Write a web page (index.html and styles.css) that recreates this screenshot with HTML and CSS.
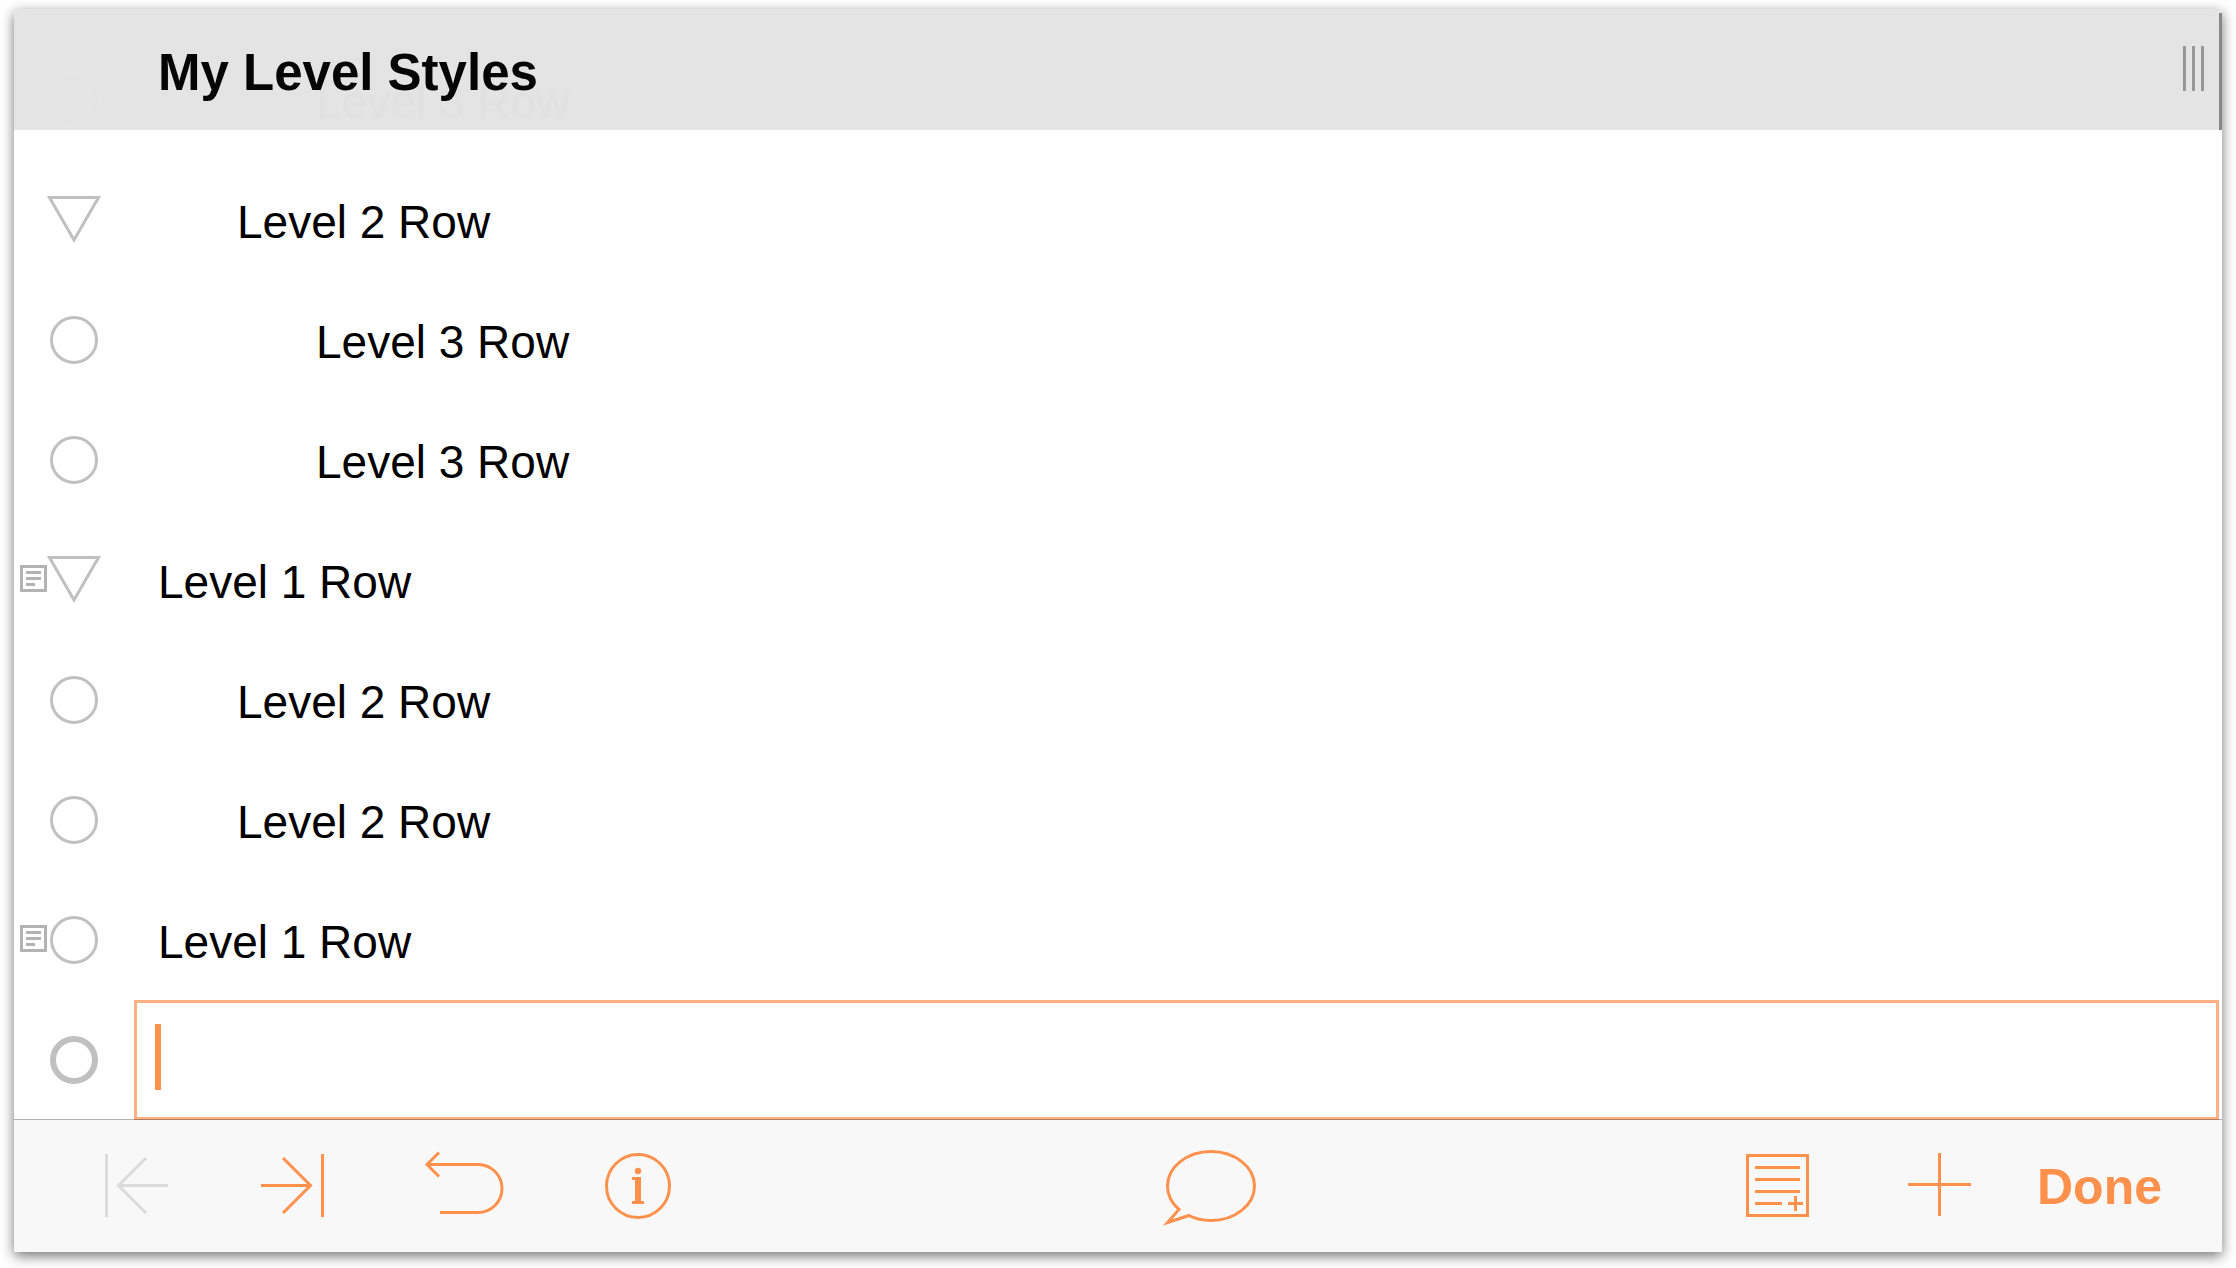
FILE: index.html
```html
<!DOCTYPE html>
<html lang="en">
<head>
<meta charset="UTF-8">
<meta name="viewport" content="width=device-width, initial-scale=1.0">
<title>My Level Styles</title>
<link rel="stylesheet" href="styles.css">
</head>
<body>
<svg class="defs" aria-hidden="true">
  <symbol id="icon-open" viewBox="0 0 54 48"><path d="M2.5 1.5h49L27 44z"/></symbol>
  <symbol id="icon-leaf" viewBox="0 0 54 48"><circle cx="27" cy="24" r="22.5"/></symbol>
  <symbol id="icon-note" viewBox="0 0 27 27"><path d="M1.5 1.5h24v24h-24zM6 7.5h15M6 13.5h15M6 19.5h9"/></symbol>
</svg>

<div class="window">
  <header>
    <div class="row under" aria-hidden="true">
      <div class="gutter"><span class="handle"><svg><use href="#icon-leaf"/></svg></span></div>
      <span class="text level-3">Level 3 Row</span>
    </div>
    <h1>My Level Styles</h1>
    <button class="grip" aria-label="Resize columns"><i></i><i></i><i></i></button>
    <div class="scroll-edge"></div>
  </header>

  <main class="outline">
    <div class="row">
      <div class="gutter"><button class="handle" aria-label="Collapse row"><svg><use href="#icon-open"/></svg></button></div>
      <span class="text level-2">Level 2 Row</span>
    </div>
    <div class="row">
      <div class="gutter"><button class="handle" aria-label="Select row"><svg><use href="#icon-leaf"/></svg></button></div>
      <span class="text level-3">Level 3 Row</span>
    </div>
    <div class="row">
      <div class="gutter"><button class="handle" aria-label="Select row"><svg><use href="#icon-leaf"/></svg></button></div>
      <span class="text level-3">Level 3 Row</span>
    </div>
    <div class="row">
      <div class="gutter">
        <button class="note" aria-label="Show note"><svg><use href="#icon-note"/></svg></button>
        <button class="handle" aria-label="Collapse row"><svg><use href="#icon-open"/></svg></button>
      </div>
      <span class="text">Level 1 Row</span>
    </div>
    <div class="row">
      <div class="gutter"><button class="handle" aria-label="Select row"><svg><use href="#icon-leaf"/></svg></button></div>
      <span class="text level-2">Level 2 Row</span>
    </div>
    <div class="row">
      <div class="gutter"><button class="handle" aria-label="Select row"><svg><use href="#icon-leaf"/></svg></button></div>
      <span class="text level-2">Level 2 Row</span>
    </div>
    <div class="row">
      <div class="gutter">
        <button class="note" aria-label="Show note"><svg><use href="#icon-note"/></svg></button>
        <button class="handle" aria-label="Select row"><svg><use href="#icon-leaf"/></svg></button>
      </div>
      <span class="text">Level 1 Row</span>
    </div>
    <div class="row">
      <div class="gutter"><button class="handle" aria-label="Select row"><svg viewBox="0 0 54 48"><circle class="thick" cx="27" cy="24" r="21"/></svg></button></div>
      <label class="editor">
        <span class="caret"></span>
        <input type="text" aria-label="Row text">
      </label>
    </div>
  </main>

  <footer class="toolbar">
    <div class="tools">
      <button aria-label="Outdent" disabled>
        <svg width="63" height="64" viewBox="0 0 63 64"><path d="M1.5 0v63M63 31.5H14M41 4L13.5 31.5 41 59"/></svg>
      </button>
      <button aria-label="Indent">
        <svg width="63" height="64" viewBox="0 0 63 64"><path d="M61.5 0v63M0 31.5h49M22 4l27.5 27.5L22 59"/></svg>
      </button>
      <button aria-label="Undo">
        <svg width="89" height="66" viewBox="0 0 89 66"><path d="M22 -0.5L10 11.5l12 12M10 11.5h51a24 24 0 0 1 0 48H23"/></svg>
      </button>
      <button aria-label="Info">
        <svg width="78" height="66" viewBox="0 0 78 66"><circle cx="39" cy="33" r="31.5"/><path class="solid" d="M33 24h9v24h3v3H33v-3h3V27h-3z"/><circle class="solid" cx="39" cy="18" r="3.2"/></svg>
      </button>
    </div>

    <button aria-label="Comments">
      <svg width="97" height="76" viewBox="0 0 97 76"><path d="M16 61.5C8.5 55 4.5 46.5 4.5 38 4.5 19 24 3.5 48 3.5S91.5 19 91.5 38 72 72.5 48 72.5C40 72.5 32.5 71 26 67.5L4.5 74.5z"/></svg>
    </button>

    <div class="tools-end">
      <div class="tools">
        <button aria-label="Add note">
          <svg width="63" height="64" viewBox="0 0 63 64"><path d="M1.5 1.5h60v60h-60zM9 13.5h45M9 25.5h45M9 37.5h45M9 49.5h27M42 49.5h15M49.5 42v15"/></svg>
        </button>
        <button aria-label="Add row">
          <svg width="75" height="66" viewBox="0 0 75 66"><path d="M6 31.5h63M37.5 0v63"/></svg>
        </button>
      </div>
      <button class="done">Done</button>
    </div>
  </footer>
</div>
</body>
</html>
```
FILE: styles.css
```css
:root {
  --orange: #ff914d; --orange-light: #ffb082;
  --gray: #c0c0c0; --gray-note: #b3b3b3;
  --bar: #f8f8f8; --header: #e4e4e4;
}
* { box-sizing: border-box; margin: 0; padding: 0; }
body { min-height: 100vh; display: flex; padding: 9px 14px 16px; background: white; color: black; font-family: "Liberation Sans", Arial, sans-serif; font-size: 46px; }
button { border: none; background: none; font: inherit; color: inherit; cursor: pointer; }
svg { display: block; overflow: visible; fill: none; stroke: currentColor; stroke-width: 3; }
.defs { position: absolute; width: 0; height: 0; }

.window { flex: 1; display: flex; flex-direction: column; background: white; border-radius: 4px 4px 0 0; box-shadow: 0 4px 13px rgba(0,0,0,0.55); }

header { position: relative; display: flex; align-items: center; justify-content: space-between; height: 121px; padding: 0 18px 0 144px; background: var(--header); border-radius: 4px 4px 0 0; overflow: hidden; }
h1 { position: relative; padding-top: 6px; font-size: 51px; font-weight: 700; line-height: 60px; color: #050505; }
.grip { display: flex; gap: 6px; margin-bottom: 2px; color: #979797; }
.grip i { width: 3px; height: 45px; background: currentColor; }
.scroll-edge { position: absolute; top: 4px; right: 0; bottom: 0; width: 3px; background: #888; }

.outline { flex: 1; padding-top: 30px; }
.row { display: flex; height: 120px; }
.gutter { flex: none; width: 120px; padding-right: 33px; display: flex; align-items: center; justify-content: flex-end; color: var(--gray); }
.handle svg { width: 54px; height: 48px; }
.note { color: var(--gray-note); padding-bottom: 3px; }
.note svg { width: 27px; height: 27px; }
.thick { stroke-width: 6; }
.text { padding: 4px 0 0 24px; line-height: 116px; }
.level-2 { margin-left: 79px; }
.level-3 { margin-left: 158px; }

/* row scrolled beneath the translucent header */
.under { position: absolute; left: 0; top: 31px; color: #e1e1e1; }
.under .gutter { color: #e2e2e2; }
.under svg { stroke-width: 1; }

.editor { flex: 1; display: flex; align-items: flex-start; margin-right: 3px; padding: 21px 18px; border: 3px solid var(--orange-light); }
.caret { width: 6px; height: 66px; background: var(--orange); }
.editor input { flex: 1; height: 66px; border: none; outline: none; background: none; font: inherit; caret-color: transparent; }

.toolbar { position: relative; display: flex; align-items: center; justify-content: space-between; height: 133px; margin-top: -1px; padding: 0 60px 0 91px; border-top: 1px solid rgba(0,0,0,0.3); background: var(--bar); background-clip: padding-box; color: var(--orange); }
.tools { display: flex; align-items: center; gap: 93px; }
.tools-end { display: flex; align-items: center; gap: 60px; }
.toolbar button:disabled { color: #dbdbdb; }
.solid { fill: currentColor; stroke: none; }
.toolbar .done { width: 125px; padding-top: 2px; font-size: 50px; font-weight: 700; line-height: 60px; }
```
